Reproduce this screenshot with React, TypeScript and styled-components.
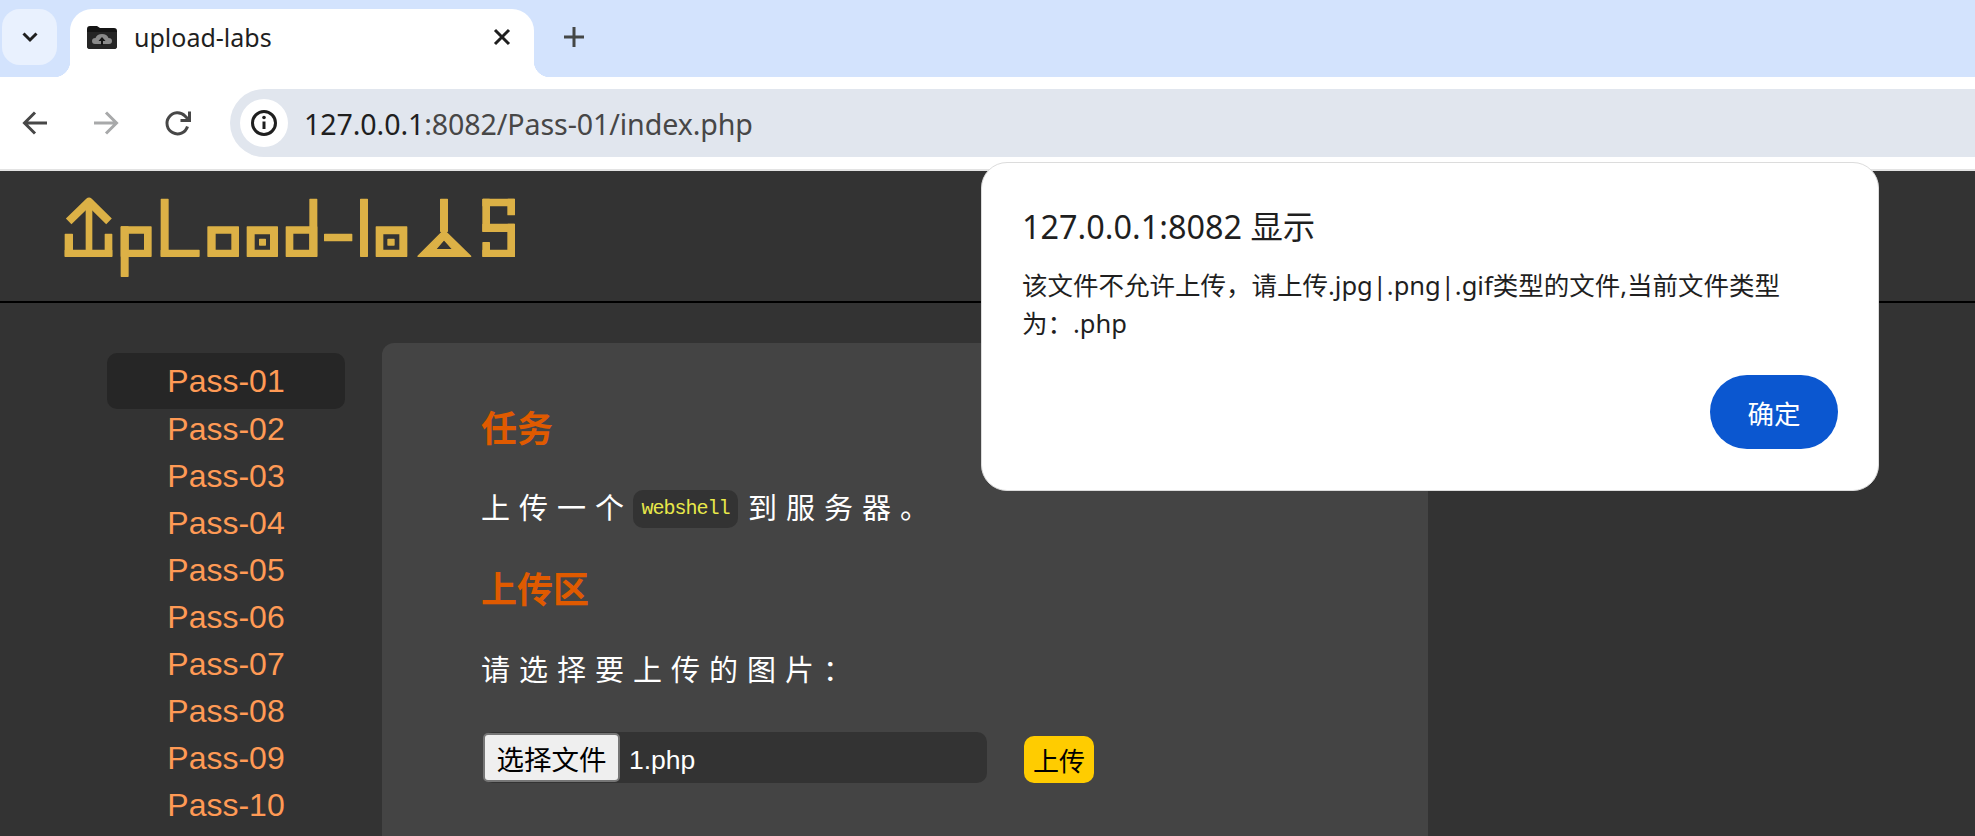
import React from "react";
import styled, { createGlobalStyle } from "styled-components";

const UI = `"Noto Sans", "Noto Sans CJK SC", sans-serif`;
const CJK = `"Liberation Sans", "Noto Sans CJK SC", sans-serif`;

const Global = createGlobalStyle`
  html, body { margin: 0; padding: 0; background: #333; }
  * { box-sizing: border-box; }
`;

const Shell = styled.div`
  position: relative;
  width: 1975px;
  height: 836px;
  overflow: hidden;
  font-family: ${UI};
`;

const TabStrip = styled.div`
  height: 77px;
  background: #d3e3fd;
  display: flex;
  align-items: flex-start;
  padding: 9px 0 0 2px;
`;

const TabSearch = styled.div`
  width: 55px;
  height: 56px;
  border-radius: 18px;
  background: #e9f1fe;
  display: flex;
  align-items: center;
  justify-content: center;
  color: #1f1f1f;
`;

const Tab = styled.div`
  margin-left: 13px;
  width: 464px;
  height: 68px;
  background: #fff;
  border-radius: 22px 22px 0 0;
  display: flex;
  align-items: center;
  padding: 0 23px 12px 16px;
  color: #1f1f1f;
  position: relative;
  &::before, &::after {
    content: "";
    position: absolute;
    bottom: 0;
    width: 16px;
    height: 16px;
  }
  &::before {
    left: -16px;
    background: radial-gradient(circle at 0 0, transparent 16px, #fff 16.5px);
  }
  &::after {
    right: -16px;
    background: radial-gradient(circle at 100% 0, transparent 16px, #fff 16.5px);
  }
`;

const TabTitle = styled.span`
  margin-left: 16px;
  flex: 1;
  font-size: 25px;
  line-height: 32px;
`;

const NewTab = styled.div`
  margin-left: 29px;
  height: 56px;
  display: flex;
  align-items: center;
  color: #444746;
`;

const Toolbar = styled.div`
  height: 94px;
  background: #fff;
  border-bottom: 2px solid #e3e3e3;
  display: flex;
  align-items: flex-start;
  padding: 12px 0 0 22px;
`;

const NavButton = styled.div<{ $w: number; $dim?: boolean }>`
  width: ${(p) => p.$w}px;
  height: 68px;
  display: flex;
  align-items: center;
  color: ${(p) => (p.$dim ? "#a8a9aa" : "#474747")};
`;

const Omnibox = styled.div`
  flex: 1;
  height: 68px;
  background: #e1e6ee;
  border-radius: 34px 0 0 34px;
  display: flex;
  align-items: center;
  padding-left: 10px;
`;

const InfoChip = styled.div`
  width: 48px;
  height: 48px;
  border-radius: 50%;
  background: #fff;
  display: flex;
  align-items: center;
  justify-content: center;
  color: #1f1f1f;
`;

const Url = styled.div`
  margin-left: 16px;
  font-size: 28.6px;
  color: #474747;
  white-space: nowrap;
  letter-spacing: -0.1px;
  b { font-weight: 400; color: #1f1f1f; }
`;

const Page = styled.div`
  background: #333;
  height: 665px;
  overflow: hidden;
  font-family: ${CJK};
`;

const Header = styled.header`
  height: 132px;
  border-bottom: 2px solid #000;
  padding: 26px 0 0 64px;
`;

const Main = styled.div`
  display: flex;
  align-items: flex-start;
  padding: 40px 0 0 107px;
  gap: 37px;
`;

const Sidebar = styled.nav`
  width: 238px;
  flex: none;
  padding-top: 14.5px;
  display: flex;
  flex-direction: column;
`;

const PassLink = styled.a<{ $active?: boolean }>`
  display: block;
  text-align: center;
  font-size: 32px;
  height: ${(p) => (p.$active ? 56 : 47)}px;
  line-height: ${(p) => (p.$active ? 56 : 47)}px;
  margin: ${(p) => (p.$active ? "-4.5px 0 -3.5px" : "0")};
  border-radius: 10px;
  color: #ff9a55;
  background: ${(p) => (p.$active ? "#262626" : "transparent")};
`;

const Panel = styled.section`
  width: 1046px;
  flex: none;
  height: 600px;
  background: #444;
  border-radius: 12px 12px 0 0;
  padding: 59px 0 0 99px;
`;

const Heading = styled.h2<{ $top?: number }>`
  margin: ${(p) => p.$top ?? 0}px 0 0;
  font-size: 36px;
  line-height: 56px;
  font-weight: 700;
  color: #e05a00;
`;

const Para = styled.p<{ $top: number }>`
  margin: ${(p) => p.$top}px 0 0;
  font-size: 29px;
  line-height: 40px;
  letter-spacing: 9px;
  color: #fff;
  display: flex;
  align-items: center;
  white-space: nowrap;
`;

const Code = styled.code`
  display: inline-flex;
  align-items: center;
  justify-content: center;
  width: 105px;
  height: 38px;
  margin-right: 10px;
  background: #333;
  border-radius: 10px;
  font-family: "Liberation Mono", monospace;
  font-size: 20px;
  letter-spacing: -1px;
  color: #e8e84a;
`;

const UploadRow = styled.div`
  margin: 41px 0 0 2px;
  display: flex;
  align-items: flex-end;
  gap: 37px;
`;

const FileField = styled.div`
  width: 504px;
  height: 51px;
  background: #333;
  border-radius: 10px;
  display: flex;
  align-items: center;
  color: #fff;
  font-size: 26.5px;
`;

const FileButton = styled.div`
  width: 137px;
  height: 49px;
  background: #efefef;
  border: 2px solid #767676;
  border-radius: 5px;
  color: #000;
  font-size: 27.5px;
  display: flex;
  align-items: center;
  justify-content: center;
`;

const FileName = styled.span`
  margin-left: 9px;
  padding-top: 5px;
`;

const UploadButton = styled.div`
  width: 70px;
  height: 47px;
  background: #ffcc00;
  border-radius: 10px;
  color: #000;
  font-size: 26px;
  display: flex;
  align-items: center;
  justify-content: center;
`;

const Dialog = styled.div`
  position: absolute;
  left: 981px;
  top: 162px;
  width: 898px;
  height: 329px;
  background: #fff;
  border: 1px solid #dcdcdc;
  border-radius: 26px;
  padding: 41px 40px 0 40px;
  font-family: "Noto Sans", "Noto Sans CJK SC", sans-serif;
  color: #1f1f1f;
`;

const DialogTitle = styled.div`
  font-size: 32.4px;
  line-height: 44px;
`;

const DialogText = styled.div`
  margin-top: 18px;
  width: 780px;
  font-size: 25.5px;
  line-height: 38px;
`;

const DialogActions = styled.div`
  margin-top: 33px;
  display: flex;
  justify-content: flex-end;
`;

const OkButton = styled.div`
  width: 128px;
  height: 74px;
  border-radius: 37px;
  background: #0b57d0;
  color: #fff;
  font-size: 26.5px;
  display: flex;
  align-items: center;
  justify-content: center;
`;

const r = (a: number, b: number, c: number, d: number) =>
  `M${a + 2} ${b + 2}H${c - 2}V${d - 2}H${a + 2}Z`;
const h = (a: number, b: number, c: number, d: number) =>
  `M${a - 2} ${b - 2}H${c + 2}V${d + 2}H${a - 2}Z`;

const logoParts = [
  "M84 153L145 94L205 153",
  r(135, 95, 155, 240),
  r(72, 190, 97, 260),
  r(72, 238, 215, 260),
  r(192, 190, 215, 260),
  r(240, 168, 333, 260) + h(264, 190, 310, 238),
  r(240, 168, 264, 320),
  r(360, 85, 384, 260),
  r(360, 238, 477, 260),
  r(500, 168, 595, 260) + h(525, 190, 572, 238),
  r(618, 168, 712, 260) + h(642, 192, 688, 238),
  r(655, 205, 676, 226),
  r(735, 168, 830, 260) + h(758, 190, 806, 238),
  r(806, 85, 830, 260),
  r(850, 190, 935, 213),
  r(958, 85, 982, 260),
  r(1005, 168, 1100, 260) + h(1028, 192, 1076, 238),
  r(1040, 205, 1062, 226),
  r(1198, 85, 1222, 185),
  "M1132 258L1210 180L1290 258Z" + "M1184 238H1237L1210 208Z",
  r(1325, 85, 1423, 108),
  r(1400, 85, 1423, 135),
  r(1325, 85, 1348, 185),
  r(1325, 160, 1423, 185),
  r(1400, 160, 1423, 260),
  r(1325, 238, 1423, 260),
  r(1325, 215, 1348, 260),
];

const Logo = () => (
  <svg width="454" height="82" viewBox="70 80 1362 246" style={{ display: "block" }}>
    {logoParts.map((d, i) =>
      i === 0 ? (
        <path key={i} d={d} fill="none" stroke="#dcb146" strokeWidth="24" strokeLinejoin="round" />
      ) : (
        <path key={i} d={d} fill="#dcb146" stroke="#dcb146" strokeWidth="4" strokeLinejoin="round" fillRule="evenodd" />
      )
    )}
  </svg>
);

const Favicon = () => (
  <svg width="32" height="26" viewBox="0 0 32 26" style={{ flex: "none" }}>
    <path d="M1 5Q1 2 4 2H11L14 4H28Q31 4 31 7V22Q31 25 28 25H4Q1 25 1 22Z" fill="#151515" />
    <path d="M1 8H31V22Q31 25 28 25H4Q1 25 1 22Z" fill="#252525" />
    <path d="M9 20Q6 20 6 17Q6 14 9.500 14Q11 10 16 10Q21 10 22.500 14Q26 14 26 17Q26 20 23 20Z" fill="#8a8a8a" />
    <path d="M16 13L12.500 17H15V21H17V17H19.500Z" fill="#151515" />
  </svg>
);

const Chevron = () => (
  <svg width="18" height="12" viewBox="0 0 18 12">
    <path d="M2.500 2.500L9 9L15.500 2.500" fill="none" stroke="currentColor" strokeWidth="3" />
  </svg>
);

const Cross = () => (
  <svg width="18" height="18" viewBox="0 0 18 18">
    <path d="M2 2L16 16M16 2L2 16" fill="none" stroke="currentColor" strokeWidth="3" />
  </svg>
);

const Plus = () => (
  <svg width="22" height="22" viewBox="0 0 22 22">
    <path d="M11 1V21M1 11H21" fill="none" stroke="currentColor" strokeWidth="3" />
  </svg>
);

const Back = () => (
  <svg width="26" height="26" viewBox="0 0 26 26">
    <path d="M25 13H3M13 2.500L2.500 13L13 23.500" fill="none" stroke="currentColor" strokeWidth="3" />
  </svg>
);

const Forward = () => (
  <svg width="26" height="26" viewBox="0 0 26 26">
    <path d="M1 13H23M13 2.500L23.500 13L13 23.500" fill="none" stroke="currentColor" strokeWidth="3" />
  </svg>
);

const Reload = () => (
  <svg width="28" height="28" viewBox="0 0 28 28">
    <path d="M23.500 17.500A10.500 10.500 0 1 1 21 7L24.500 10.500" fill="none" stroke="currentColor" strokeWidth="3" />
    <path d="M25.500 2.500V11.500H16.500" fill="none" stroke="currentColor" strokeWidth="3" />
  </svg>
);

const Info = () => (
  <svg width="28" height="28" viewBox="0 0 28 28">
    <circle cx="14" cy="14" r="11.500" fill="none" stroke="currentColor" strokeWidth="3" />
    <path d="M14 12.500V20" stroke="currentColor" strokeWidth="3" />
    <circle cx="14" cy="8.500" r="1.800" fill="currentColor" />
  </svg>
);

const passes = ["01", "02", "03", "04", "05", "06", "07", "08", "09", "10"];

export default function App() {
  return (
    <Shell>
      <Global />
      <TabStrip>
        <TabSearch><Chevron /></TabSearch>
        <Tab>
          <Favicon />
          <TabTitle>upload-labs</TabTitle>
          <Cross />
        </Tab>
        <NewTab><Plus /></NewTab>
      </TabStrip>
      <Toolbar>
        <NavButton $w={71}><Back /></NavButton>
        <NavButton $w={71} $dim><Forward /></NavButton>
        <NavButton $w={66}><Reload /></NavButton>
        <Omnibox>
          <InfoChip><Info /></InfoChip>
          <Url><b>127.0.0.1</b>:8082/Pass-01/index.php</Url>
        </Omnibox>
      </Toolbar>
      <Page>
        <Header><Logo /></Header>
        <Main>
          <Sidebar>
            {passes.map((n, i) => (
              <PassLink key={n} $active={i === 0}>Pass-{n}</PassLink>
            ))}
          </Sidebar>
          <Panel>
            <Heading>任务</Heading>
            <Para $top={31}>上传一个<Code>webshell</Code>到服务器。</Para>
            <Heading $top={34}>上传区</Heading>
            <Para $top={32}>请选择要上传的图片：</Para>
            <UploadRow>
              <FileField>
                <FileButton>选择文件</FileButton>
                <FileName>1.php</FileName>
              </FileField>
              <UploadButton>上传</UploadButton>
            </UploadRow>
          </Panel>
        </Main>
      </Page>
      <Dialog>
        <DialogTitle>127.0.0.1:8082 显示</DialogTitle>
        <DialogText>该文件不允许上传，请上传.jpg|.png|.gif类型的文件,当前文件类型为：.php</DialogText>
        <DialogActions><OkButton>确定</OkButton></DialogActions>
      </Dialog>
    </Shell>
  );
}
